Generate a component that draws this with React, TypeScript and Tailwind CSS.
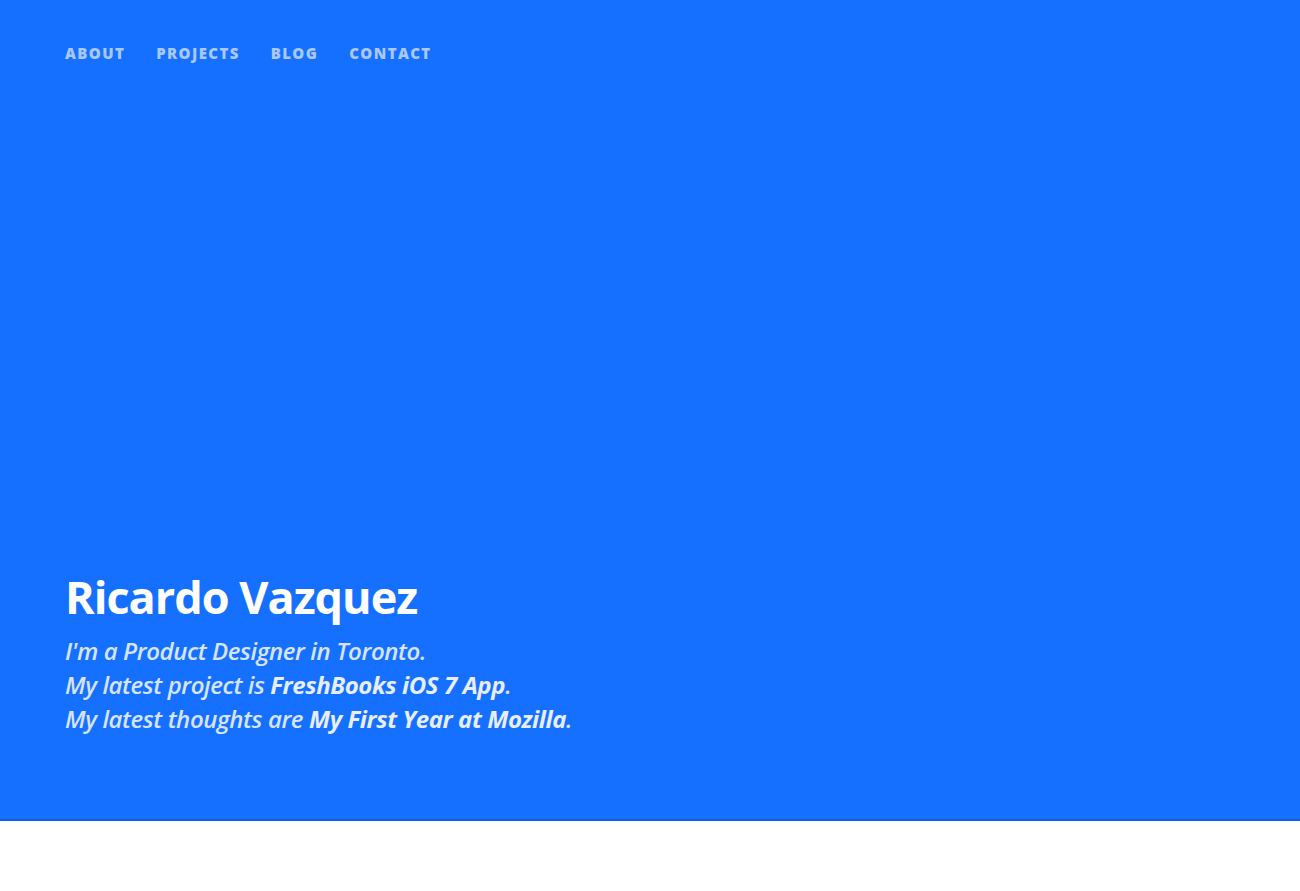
import React from 'react';

const links = ['About', 'Projects', 'Blog', 'Contact'];

const App: React.FC = () => {
	return (
		<div className="min-h-[891px] w-full bg-white">
			<header className="flex h-[821px] flex-col border-b-2 border-[#0f60d6] bg-[#1670ff] px-[65px] font-['Open_Sans',sans-serif]">
				<nav className="flex gap-[31px] pt-[44px]">
					{links.map((l) => (
						<a
							key={l}
							href="#"
							className="text-[15px] font-extrabold uppercase leading-[18px] tracking-[1.4px] text-[#a9c8ff]"
						>
							{l}
						</a>
					))}
				</nav>
				<div className="mt-auto pb-[83px]">
					<h1 className="text-[45px] font-bold leading-[56px] tracking-[-1px] text-white">Ricardo Vazquez</h1>
					<div className="mt-[9px] text-[24px] font-semibold italic leading-[34px] tracking-[-0.4px] text-[#d6e4ff]">
						<p>I'm a Product Designer in Toronto.</p>
						<p>
							My latest project is <a href="#" className="font-bold text-[#e6eeff]">FreshBooks iOS 7 App</a>.
						</p>
						<p>
							My latest thoughts are <a href="#" className="font-bold text-[#e6eeff]">My First Year at Mozilla</a>.
						</p>
					</div>
				</div>
			</header>
		</div>
	);
};

export default App;
